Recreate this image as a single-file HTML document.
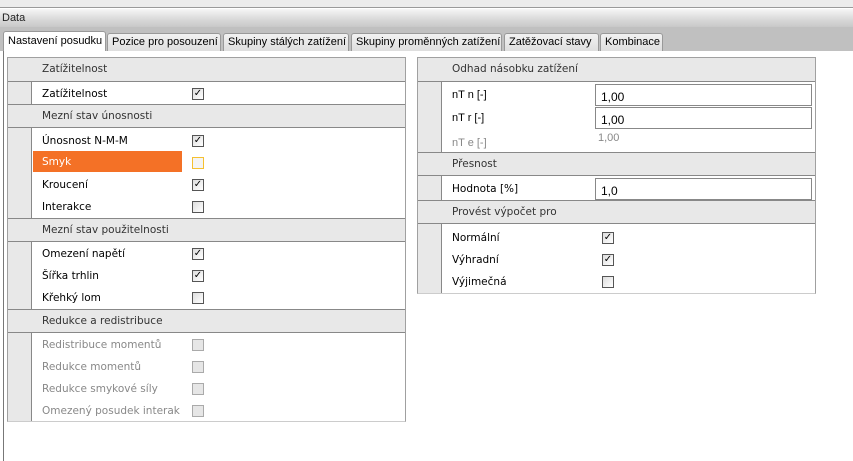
<!DOCTYPE html>
<html><head><meta charset="utf-8"><style>
*{margin:0;padding:0;box-sizing:border-box}
body{width:853px;height:461px;overflow:hidden;background:#fff;font-family:"Liberation Sans","DejaVu Sans",sans-serif;font-size:11px;color:#000;position:relative}
.a{position:absolute}
.top{left:0;top:0;width:853px;height:8px;background:#ececec;border-bottom:1px solid #9a9a9a}
.data{left:0;top:9px;width:853px;height:18px;background:linear-gradient(#f6f6f6,#d8d8d8 60%,#c8c8c8);font-size:11px;padding:3px 0 0 2px;color:#222}
.strip{left:0;top:27px;width:853px;height:24px;background:#c0c0c0}
.tab{position:absolute;top:33px;height:18px;background:linear-gradient(#f2f2f2,#dedede);border:1px solid #999;border-bottom:none;border-radius:3px 3px 0 0;padding:2px 4px 0;font-size:11px;white-space:nowrap}
.tab.act{top:31px;height:20px;background:#fff;padding-top:3px}
.lb{left:3px;top:51px;width:1px;height:410px;background:#777}
.panel{position:absolute;background:#fff;border:1px solid #a0a0a0;border-bottom-color:#ccc}
.gut{position:absolute;left:0;top:0;width:24px;bottom:0;background:#e8e8e8;border-right:1px solid #888}
.hd{position:absolute;left:0;right:0;height:24px;background:#e8e8e8;border-top:1px solid #888;border-bottom:1px solid #888;padding:5px 0 0 34px;color:#333;font-family:"DejaVu Sans",sans-serif;font-size:10.5px}
.hd.f{border-top:none}
.lab{position:absolute;left:34px;font-family:"DejaVu Sans",sans-serif;font-size:10.5px}
.g{color:#888}
.cb{position:absolute;width:12px;height:12px;border:1px solid #555;background:linear-gradient(135deg,#ddd,#fff);font-size:10px;line-height:10px;text-align:center;font-weight:bold}
.cb.d{border-color:#aaa;background:#e6e6e6}
.cb.o{border-color:#f5c030;background:#f4f4f4}
.inp{position:absolute;left:177px;width:217px;height:22px;border:1px solid #888;background:#fff;padding:5px 0 0 5px;font-size:12px}
</style></head><body>
<div class="a top"></div>
<div class="a data">Data</div>
<div class="a strip"></div>
<div class="tab act" style="left:3px;width:103px">Nastavení posudku</div>
<div class="tab" style="left:107px;width:114px">Pozice pro posouzení</div>
<div class="tab" style="left:223px;width:126px">Skupiny stálých zatížení</div>
<div class="tab" style="left:351px;width:151px">Skupiny proměnných zatížení</div>
<div class="tab" style="left:504px;width:95px">Zatěžovací stavy</div>
<div class="tab" style="left:600px;width:63px">Kombinace</div>
<div class="a lb"></div>

<div class="panel" style="left:7px;top:57px;width:399px;height:365px">
<div class="gut"></div>
<div class="hd f" style="top:0">Zatížitelnost</div>
<div class="lab" style="top:30px">Zatížitelnost</div><div class="cb" style="left:184px;top:30px">✓</div>
<div class="hd" style="top:46px">Mezní stav únosnosti</div>
<div class="lab" style="top:77px">Únosnost N-M-M</div><div class="cb" style="left:184px;top:77px">✓</div>
<div class="a" style="left:25px;top:93px;width:149px;height:21px;background:#f47126"></div>
<div class="lab" style="top:98px;color:#fff">Smyk</div><div class="cb o" style="left:184px;top:99px"></div>
<div class="lab" style="top:121px">Kroucení</div><div class="cb" style="left:184px;top:121px">✓</div>
<div class="lab" style="top:143px">Interakce</div><div class="cb" style="left:184px;top:143px"></div>
<div class="hd" style="top:160px">Mezní stav použitelnosti</div>
<div class="lab" style="top:190px">Omezení napětí</div><div class="cb" style="left:184px;top:190px">✓</div>
<div class="lab" style="top:212px">Šířka trhlin</div><div class="cb" style="left:184px;top:212px">✓</div>
<div class="lab" style="top:234px">Křehký lom</div><div class="cb" style="left:184px;top:234px"></div>
<div class="hd" style="top:251px">Redukce a redistribuce</div>
<div class="lab g" style="top:281px">Redistribuce momentů</div><div class="cb d" style="left:184px;top:281px"></div>
<div class="lab g" style="top:303px">Redukce momentů</div><div class="cb d" style="left:184px;top:303px"></div>
<div class="lab g" style="top:325px">Redukce smykové síly</div><div class="cb d" style="left:184px;top:325px"></div>
<div class="lab g" style="top:347px">Omezený posudek interak</div><div class="cb d" style="left:184px;top:347px"></div>
</div>

<div class="panel" style="left:417px;top:57px;width:399px;height:237px">
<div class="gut"></div>
<div class="hd f" style="top:0">Odhad násobku zatížení</div>
<div class="lab" style="top:31px;font-family:'Liberation Sans',sans-serif;font-size:11px">nT n [-]</div><div class="inp" style="top:26px">1,00</div>
<div class="lab" style="top:54px;font-family:'Liberation Sans',sans-serif;font-size:11px">nT r [-]</div><div class="inp" style="top:49px">1,00</div>
<div class="lab g" style="top:79px;font-family:'Liberation Sans',sans-serif;font-size:11px">nT e [-]</div><div class="a g" style="left:180px;top:74px;font-size:11px">1,00</div>
<div class="hd" style="top:94px">Přesnost</div>
<div class="lab" style="top:125px">Hodnota [%]</div><div class="inp" style="top:120px">1,0</div>
<div class="hd" style="top:142px">Provést výpočet pro</div>
<div class="lab" style="top:174px">Normální</div><div class="cb" style="left:184px;top:174px">✓</div>
<div class="lab" style="top:196px">Výhradní</div><div class="cb" style="left:184px;top:196px">✓</div>
<div class="lab" style="top:218px">Výjimečná</div><div class="cb" style="left:184px;top:218px"></div>
</div>
</body></html>
